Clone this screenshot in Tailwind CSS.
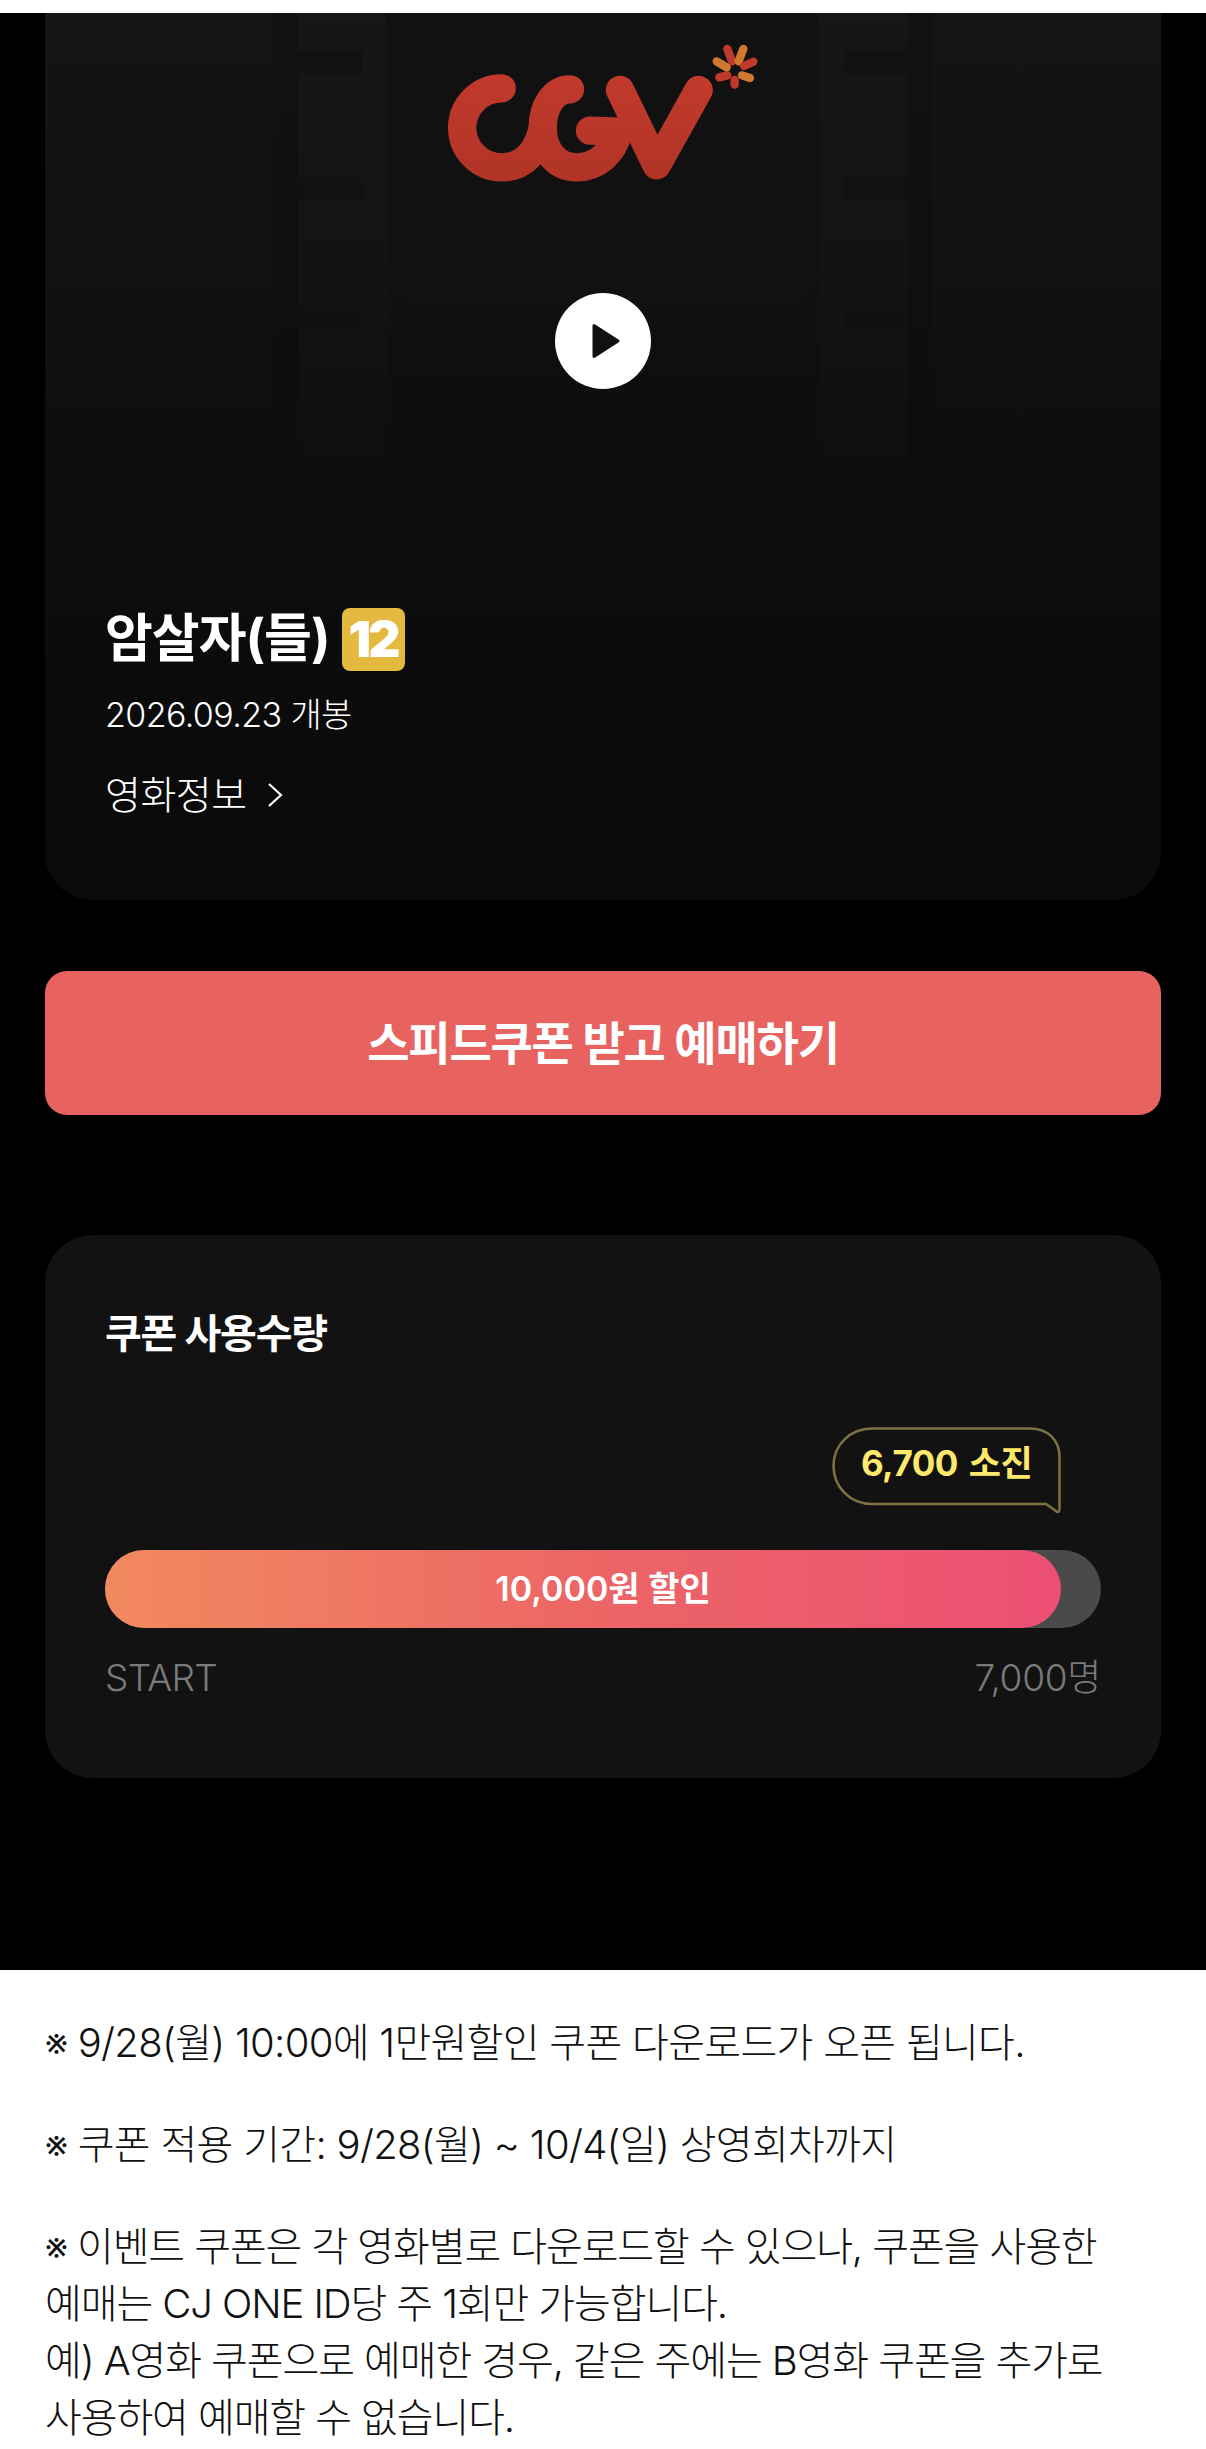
<!DOCTYPE html>
<html lang="ko">

<head>
    <meta charset="UTF-8">
    <meta name="viewport" content="width=device-width, initial-scale=1.0">
    <title>speed coupon</title>
    <script src="https://cdn.jsdelivr.net/npm/@tailwindcss/browser@4"></script>
</head>

<body class="bg-white font-['Inter','Noto_Sans_CJK_KR',sans-serif]">
    <div class="w-[1206px] h-[2449px] overflow-hidden">

        <!-- dark event section -->
        <div class="mt-[13px] h-[1957px] bg-black px-[45px]">

            <!-- movie card -->
            <div class="relative h-[887px] rounded-b-[48px] overflow-hidden bg-linear-to-b from-[#141414] to-[#0a0a0a] px-[60px] flex flex-col items-start">

                <!-- blurred poster, just the film strip shapes -->
                <div class="absolute left-[228px] top-0 w-[25px] h-[560px] bg-black/10"></div>
                <div class="absolute left-[863px] top-0 w-[24px] h-[560px] bg-black/10"></div>
                <div class="absolute left-[253px] top-0 w-[89px] h-[560px] bg-white/[0.012]"></div>
                <div class="absolute left-[774px] top-0 w-[89px] h-[560px] bg-white/[0.012]"></div>
                <div class="absolute left-[253px] top-[37px] w-[64px] h-[24px] bg-black/15"></div>
                <div class="absolute left-[253px] top-[164px] w-[64px] h-[24px] bg-black/15"></div>
                <div class="absolute left-[253px] top-[292px] w-[64px] h-[24px] bg-black/10"></div>
                <div class="absolute left-[799px] top-[37px] w-[64px] h-[24px] bg-black/15"></div>
                <div class="absolute left-[799px] top-[164px] w-[64px] h-[24px] bg-black/15"></div>
                <div class="absolute left-[799px] top-[292px] w-[64px] h-[24px] bg-black/10"></div>
                <div class="absolute left-[342px] top-0 w-[432px] h-[290px] rounded-b-[24px] bg-[#111111]"></div>
                <div class="absolute left-[342px] top-[317px] w-[432px] h-[240px] rounded-[24px] bg-[#0f0f0f]"></div>
                <div class="absolute inset-x-0 top-[300px] h-[280px] bg-linear-to-b from-transparent to-[#0c0c0c]"></div>
                <div class="absolute inset-x-0 top-[580px] bottom-0 bg-linear-to-b from-[#0c0c0c] to-[#0a0a0a]"></div>

                <!-- logo -->
                <svg class="relative mt-[7px] ml-[295px]" width="400" height="180" viewBox="0 0 1200 540" fill="none" stroke-linecap="round" stroke-linejoin="round">
                    <defs>
                        <linearGradient id="cgvRed" x1="0" y1="160" x2="0" y2="490" gradientUnits="userSpaceOnUse">
                            <stop offset="0" stop-color="#c23a2c" />
                            <stop offset="1" stop-color="#b03427" />
                        </linearGradient>
                    </defs>
                    <g stroke="url(#cgvRed)" stroke-width="85">
                        <path d="M305 205A118 118 0 1 0 305 442C370 442 412 395 428 325" />
                        <path d="M510 208C460 208 428 262 428 325C428 392 470 442 530 442C590 442 640 400 655 335L570 332" />
                        <path d="M660 210L770 436L896 210" />
                    </g>
                    <g stroke-width="25">
                        <path d="M982 87L996 124" stroke="#c03a2c" />
                        <path d="M1030 87L1016 124" stroke="#d0782f" />
                        <path d="M1060 125L1032 138" stroke="#c03a2c" />
                        <path d="M1050 174L1026 166" stroke="#d0782f" />
                        <path d="M1004 194L1004 180" stroke="#c03a2c" />
                        <path d="M958 172L982 166" stroke="#c03a2c" />
                        <path d="M950 124L980 142" stroke="#d0782f" />
                    </g>
                </svg>

                <!-- play -->
                <div class="relative mt-[93px] ml-[450px] w-[96px] h-[96px] rounded-full bg-white flex items-center justify-center">
                    <svg class="ml-[6px]" width="30" height="36" viewBox="0 0 30 36">
                        <path d="M3 2.5L27 18L3 33.500Z" fill="#111" stroke="#111" stroke-width="3" stroke-linejoin="round" />
                    </svg>
                </div>

                <!-- movie info -->
                <div class="relative mt-[215px] flex items-center h-[70px]">
                    <span class="text-[52px] leading-[70px] font-bold tracking-[-1px] text-white">암살자(들)</span>
                    <span class="ml-[12px] w-[63px] h-[63px] rounded-[8px] bg-[#e3b93f] flex items-center justify-center text-[50px] leading-none font-black text-white tracking-[-3px]">12</span>
                </div>
                <p class="relative mt-[16px] text-[34px] leading-[50px] tracking-[-0.600px] font-light text-white">2026.09.23 개봉</p>
                <div class="relative mt-[30px] flex items-center text-white">
                    <span class="text-[39px] leading-[50px] tracking-[-0.500px] font-light">영화정보</span>
                    <svg class="ml-[20px]" width="16" height="26" viewBox="0 0 16 26" fill="none" stroke="#fff" stroke-width="2.200">
                        <path d="M2 2L14 13L2 24" />
                    </svg>
                </div>
            </div>

            <!-- cta -->
            <button class="mt-[71px] w-[1116px] h-[144px] rounded-[22px] bg-[#e86360] text-white text-[46px] font-bold tracking-[-1.200px]">스피드쿠폰 받고 예매하기</button>

            <!-- coupon usage -->
            <div class="mt-[120px] h-[543px] rounded-[48px] bg-[#121212] pt-[74px] px-[60px]">
                <h2 class="text-[40px] leading-[50px] font-bold tracking-[-1.200px] text-white">쿠폰 사용수량</h2>

                <div class="mt-[68px] flex justify-end pr-[40px]">
                    <div class="relative w-[229px] h-[86px]">
                        <svg class="absolute inset-0" width="229" height="86" viewBox="0 0 229 86" fill="none">
                            <path d="M40 1.500H198C216 1.500 227.500 13 227.500 30V82C227.500 85 226 86 224 84L214 77H40C18 77 1.500 60 1.500 39C1.500 18 18 1.500 40 1.500Z" stroke="#7d7240" stroke-width="2.500" />
                        </svg>
                        <div class="relative h-[72px] flex items-center justify-center text-[35px] font-bold tracking-[-0.500px] [word-spacing:3px] text-[#ffe96b]">6,700 소진</div>
                    </div>
                </div>

                <div class="mt-[37px] relative h-[78px] rounded-full bg-[#4a4a4a]">
                    <div class="h-[78px] w-[956px] rounded-full bg-linear-to-r from-[#f2895f] via-[#ec6665] to-[#ec4f74]"></div>
                    <div class="absolute inset-x-0 top-0 h-[76px] flex items-center justify-center text-[34px] font-semibold text-white">10,000원 할인</div>
                </div>

                <div class="mt-[25px] flex justify-between text-[37px] leading-[50px] font-light text-[#7a7a7a]">
                    <span class="tracking-[-0.700px]">START</span>
                    <span class="tracking-[-0.300px]">7,000명</span>
                </div>
            </div>
        </div>

        <!-- notice -->
        <div class="pt-[44px] px-[45px] text-[40px] leading-[57px] tracking-[-1.100px] font-light text-[#111111]">
            <p class="mb-[45px] tracking-[-0.700px]">※ 9/28(월) 10:00에 1만원할인 쿠폰 다운로드가 오픈 됩니다.</p>
            <p class="mb-[45px] tracking-[-0.700px]">※ 쿠폰 적용 기간: 9/28(월) ~ 10/4(일) 상영회차까지</p>
            <p>※ 이벤트 쿠폰은 각 영화별로 다운로드할 수 있으나, 쿠폰을 사용한<br>예매는 CJ ONE ID당 주 1회만 가능합니다.<br>예) A영화 쿠폰으로 예매한 경우, 같은 주에는 B영화 쿠폰을 추가로<br>사용하여 예매할 수 없습니다.</p>
        </div>
    </div>
</body>

</html>
